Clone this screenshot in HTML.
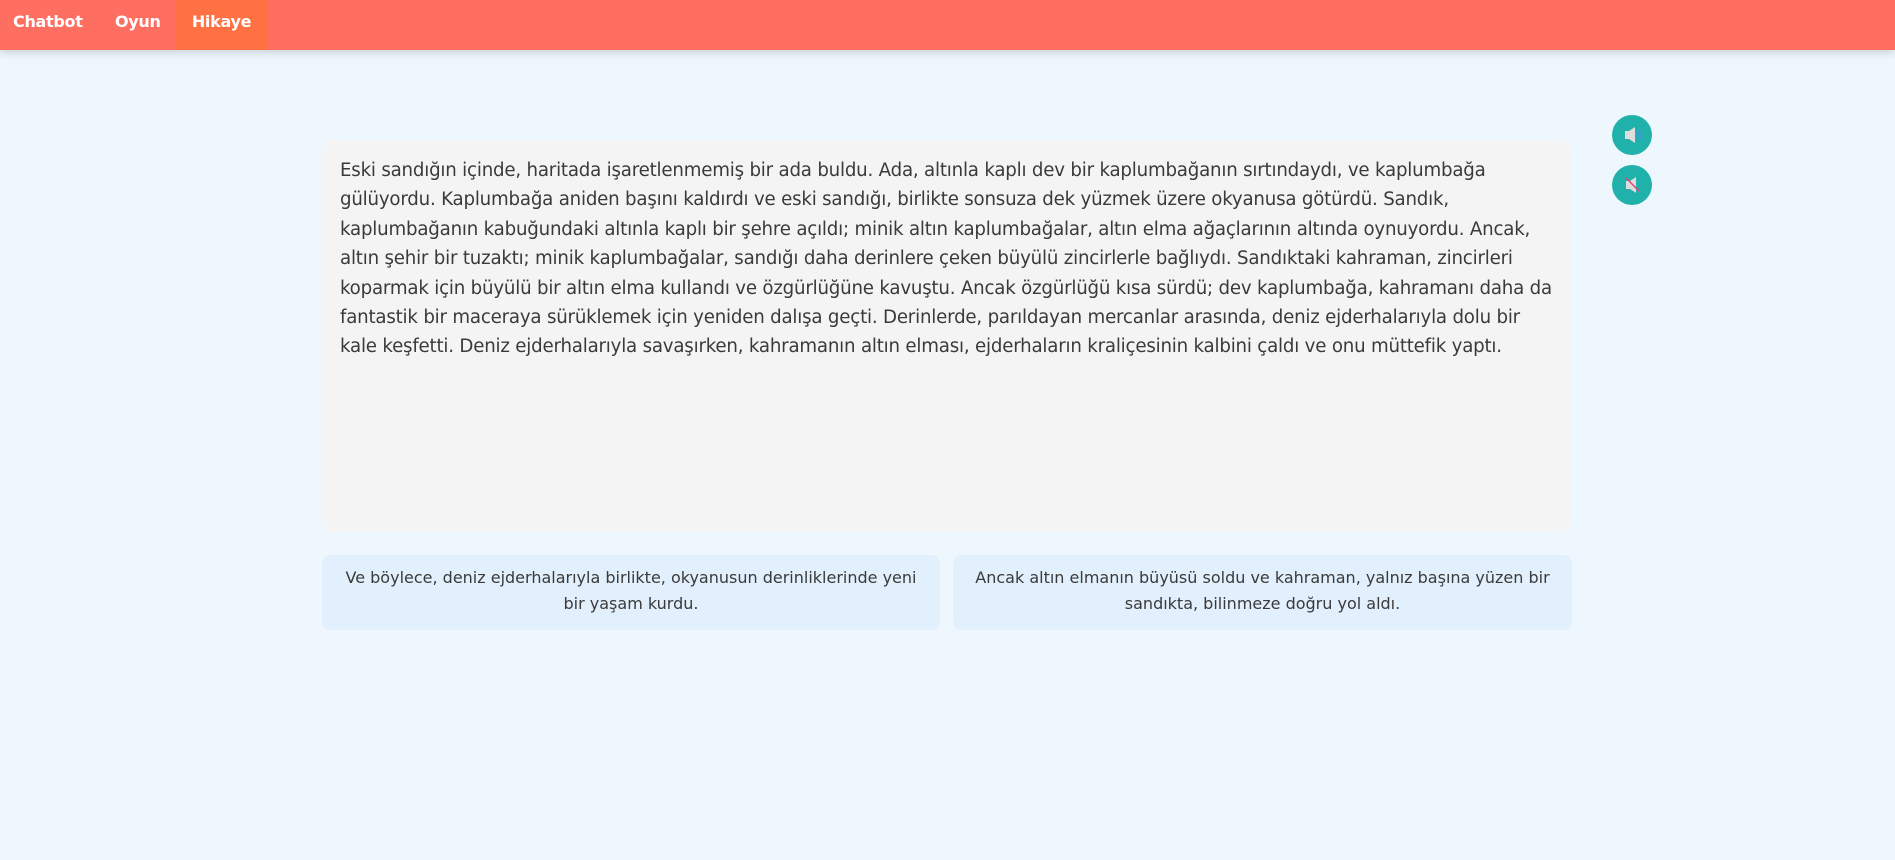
<!DOCTYPE html>
<html><head><meta charset="utf-8"><style>
body{margin:0;width:1895px;height:860px;background:#eff7fe;font-family:"DejaVu Sans","Liberation Sans",sans-serif;color:#3a3a3a;overflow:hidden;position:relative}
.nav{position:absolute;left:0;top:0;width:1895px;height:50px;background:#ff6f61;box-shadow:0 3px 8px rgba(0,0,0,.15)}
.nav a{position:absolute;top:0;height:50px;line-height:44px;color:#fff;font-weight:bold;font-size:16px;text-decoration:none;letter-spacing:-0.3px}
.story{position:absolute;left:322px;top:140px;width:1250px;height:392px;background:#f4f4f4;border-radius:10px;box-sizing:border-box;padding:16px 18px;font-size:18.2px;line-height:29.4px;letter-spacing:-0.2px}
.opt{position:absolute;top:555px;height:75px;background:#e1f0fc;border-radius:8px;box-sizing:border-box;padding:10px 10px;font-size:16px;line-height:26px;text-align:center}
.btn{position:absolute;left:1612px;width:40px;height:40px;border-radius:50%;background:#20b2aa}
</style></head><body>
<div class="nav">
<a style="left:13px">Chatbot</a>
<a style="left:115px">Oyun</a>
<a style="left:175px;width:93px;background:#ff7043;text-align:center">Hikaye</a>
</div>
<div class="btn" style="top:115px"><svg width="40" height="40"><path d="M13 16h4l6-4v16l-6-4h-4z" fill="#ddd"/><path d="M25 16q3 4 0 8M27 14q5 6 0 12" stroke="#4a90e2" fill="none" stroke-width="1.2"/></svg></div>
<div class="btn" style="top:165px"><svg width="40" height="40"><path d="M14 16h4l6-4v16l-6-4h-4z" fill="#ddd"/><path d="M14 13l13 13" stroke="#e0457b" stroke-width="1.5"/></svg></div>
<div class="story">Eski sandığın içinde, haritada işaretlenmemiş bir ada buldu. Ada, altınla kaplı dev bir kaplumbağanın sırtındaydı, ve kaplumbağa gülüyordu. Kaplumbağa aniden başını kaldırdı ve eski sandığı, birlikte sonsuza dek yüzmek üzere okyanusa götürdü. Sandık, kaplumbağanın kabuğundaki altınla kaplı bir şehre açıldı; minik altın kaplumbağalar, altın elma ağaçlarının altında oynuyordu. Ancak, altın şehir bir tuzaktı; minik kaplumbağalar, sandığı daha derinlere çeken büyülü zincirlerle bağlıydı. Sandıktaki kahraman, zincirleri koparmak için büyülü bir altın elma kullandı ve özgürlüğüne kavuştu. Ancak özgürlüğü kısa sürdü; dev kaplumbağa, kahramanı daha da fantastik bir maceraya sürüklemek için yeniden dalışa geçti. Derinlerde, parıldayan mercanlar arasında, deniz ejderhalarıyla dolu bir kale keşfetti. Deniz ejderhalarıyla savaşırken, kahramanın altın elması, ejderhaların kraliçesinin kalbini çaldı ve onu müttefik yaptı.</div>
<div class="opt" style="left:322px;width:618px;padding:10px 16px">Ve böylece, deniz ejderhalarıyla birlikte, okyanusun derinliklerinde yeni bir yaşam kurdu.</div>
<div class="opt" style="left:953px;width:619px;padding:10px 20px">Ancak altın elmanın büyüsü soldu ve kahraman, yalnız başına yüzen bir sandıkta, bilinmeze doğru yol aldı.</div>
</body></html>
